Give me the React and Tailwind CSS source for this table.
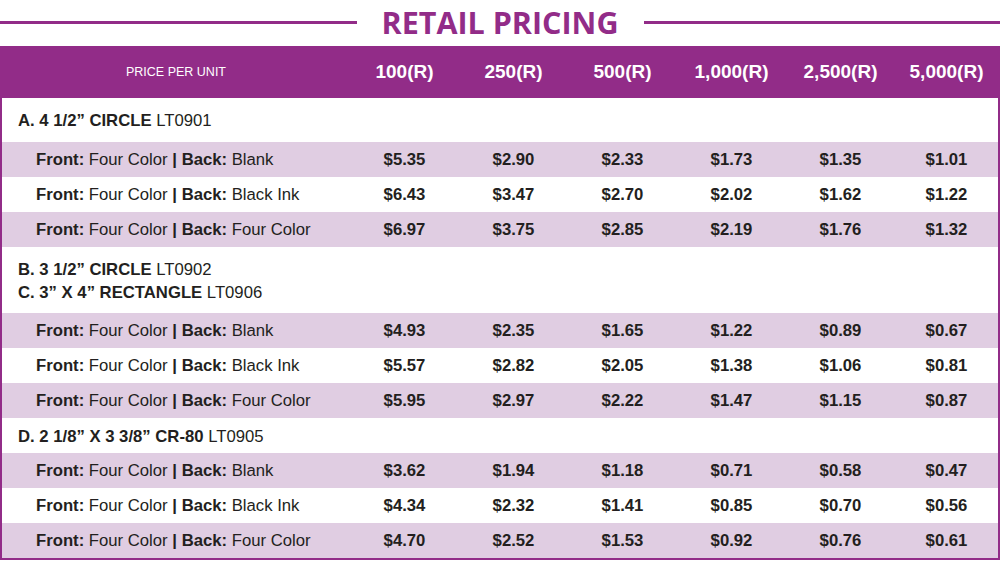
import React from 'react';

// Retail pricing table for label products
const columns = ['100(R)', '250(R)', '500(R)', '1,000(R)', '2,500(R)', '5,000(R)'];

const sections = [
  {
    titles: [{ bold: 'A. 4 1/2” CIRCLE', code: 'LT0901' }],
    height: 'h-[44px]',
    rows: [
      { back: 'Blank', prices: ['$5.35', '$2.90', '$2.33', '$1.73', '$1.35', '$1.01'] },
      { back: 'Black Ink', prices: ['$6.43', '$3.47', '$2.70', '$2.02', '$1.62', '$1.22'] },
      { back: 'Four Color', prices: ['$6.97', '$3.75', '$2.85', '$2.19', '$1.76', '$1.32'] },
    ],
  },
  {
    titles: [
      { bold: 'B. 3 1/2” CIRCLE', code: 'LT0902' },
      { bold: 'C. 3” X 4” RECTANGLE', code: 'LT0906' },
    ],
    height: 'h-[66px]',
    rows: [
      { back: 'Blank', prices: ['$4.93', '$2.35', '$1.65', '$1.22', '$0.89', '$0.67'] },
      { back: 'Black Ink', prices: ['$5.57', '$2.82', '$2.05', '$1.38', '$1.06', '$0.81'] },
      { back: 'Four Color', prices: ['$5.95', '$2.97', '$2.22', '$1.47', '$1.15', '$0.87'] },
    ],
  },
  {
    titles: [{ bold: 'D. 2 1/8” X 3 3/8” CR-80', code: 'LT0905' }],
    height: 'h-[35px]',
    rows: [
      { back: 'Blank', prices: ['$3.62', '$1.94', '$1.18', '$0.71', '$0.58', '$0.47'] },
      { back: 'Black Ink', prices: ['$4.34', '$2.32', '$1.41', '$0.85', '$0.70', '$0.56'] },
      { back: 'Four Color', prices: ['$4.70', '$2.52', '$1.53', '$0.92', '$0.76', '$0.61'] },
    ],
  },
];

function PriceRow({ row, shaded }) {
  return (
    <div
      className={`grid grid-cols-[348px_repeat(5,109px)_1fr] h-[35px] items-center ${
        shaded ? 'bg-[#e0cde2]' : 'bg-white'
      }`}
    >
      <div className="pl-[34px] whitespace-nowrap">
        <span className="font-bold">Front:</span> Four Color <span className="font-bold">|</span>{' '}
        <span className="font-bold">Back:</span> {row.back}
      </div>
      {row.prices.map((p, i) => (
        <div key={i} className="text-center font-bold">
          {p}
        </div>
      ))}
    </div>
  );
}

export default function App() {
  return (
    <div className="w-[1000px] h-[563px] bg-white overflow-hidden font-['Liberation_Sans',Arial,sans-serif] text-[#231f20]">
      {/* Title */}
      <div className="flex items-center gap-[25px] h-[46px] pb-[1px]">
        <div className="flex-1 h-[3px] bg-[#922c88]" />
        <h1 className="font-['Open_Sans',sans-serif] font-bold text-[30.5px] leading-none text-[#922c88]">
          RETAIL PRICING
        </h1>
        <div className="flex-1 h-[3px] bg-[#922c88]" />
      </div>

      {/* Header bar */}
      <div className="grid grid-cols-[348px_repeat(5,109px)_1fr] items-center h-[52px] px-[2px] bg-[#922c88] text-white">
        <div className="text-center text-[12.5px]">PRICE PER UNIT</div>
        {columns.map((c) => (
          <div key={c} className="text-center font-bold text-[19px]">
            {c}
          </div>
        ))}
      </div>

      {/* Body */}
      <div className="border-x-2 border-b-2 border-[#922c88] text-[16.7px]">
        {sections.map((s, si) => (
          <div key={si}>
            <div className={`${s.height} flex flex-col justify-center pl-[16px] pt-[1px] leading-[23px]`}>
              {s.titles.map((t) => (
                <div key={t.code} className="whitespace-nowrap">
                  <span className="font-bold">{t.bold}</span> {t.code}
                </div>
              ))}
            </div>
            {s.rows.map((r, ri) => (
              <PriceRow key={ri} row={r} shaded={ri !== 1} />
            ))}
          </div>
        ))}
      </div>
    </div>
  );
}
